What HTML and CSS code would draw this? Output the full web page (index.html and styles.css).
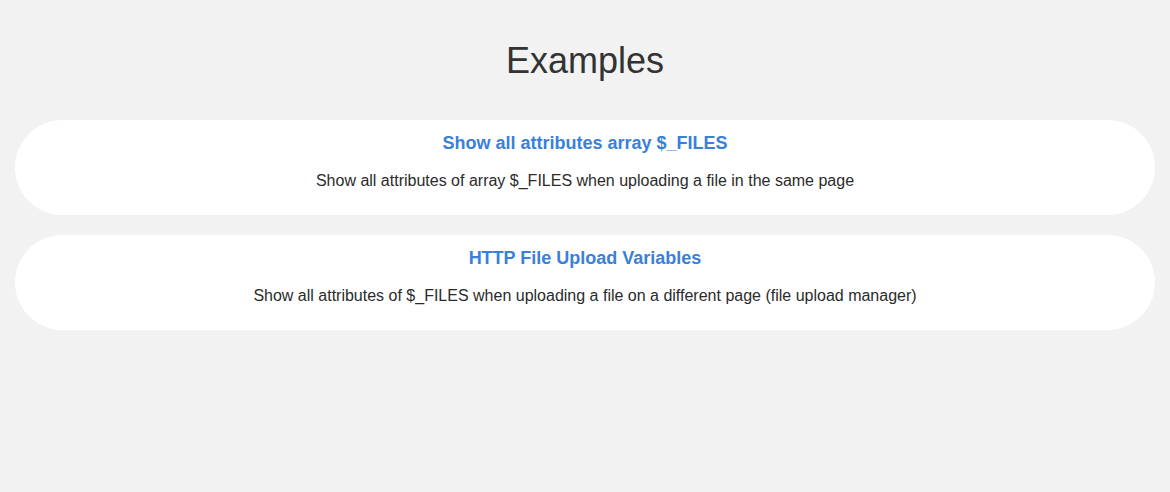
FILE: index.html
```html
<!DOCTYPE html>
<html>
<head>
<meta charset="utf-8">
<link rel="stylesheet" href="styles.css">
</head>
<body>
<main class="page">
  <h1 class="page-title">Examples</h1>
  <div class="cards">
    <div class="card">
      <a class="card-title" href="#">Show all attributes array $_FILES</a>
      <p class="card-desc">Show all attributes of array $_FILES when uploading a file in the same page</p>
    </div>
    <div class="card">
      <a class="card-title" href="#">HTTP File Upload Variables</a>
      <p class="card-desc">Show all attributes of $_FILES when uploading a file on a different page (file upload manager)</p>
    </div>
  </div>
</main>
</body>
</html>
```
FILE: styles.css
```css
html, body {
  margin: 0;
  padding: 0;
  background: #f2f2f2;
  font-family: "Liberation Sans", Arial, sans-serif;
  color: #2b2b2b;
}
.page {
  padding: 41px 15px 0;
}
.page-title {
  margin: 0;
  text-align: center;
  font-weight: normal;
  font-size: 36px;
  line-height: 40px;
  color: #333;
}
.cards {
  margin-top: 39px;
  display: flex;
  flex-direction: column;
  gap: 20px;
}
.card {
  background: #fff;
  border-radius: 48px;
  height: 95px;
  box-sizing: border-box;
  padding-top: 12px;
  display: flex;
  flex-direction: column;
  align-items: center;
}
.card-title {
  font-size: 18px;
  line-height: 22px;
  font-weight: bold;
  color: #3a80d9;
  text-decoration: none;
}
.card-desc {
  margin: 18px 0 0;
  font-size: 16px;
  line-height: 18px;
  color: #2b2b2b;
}
```
